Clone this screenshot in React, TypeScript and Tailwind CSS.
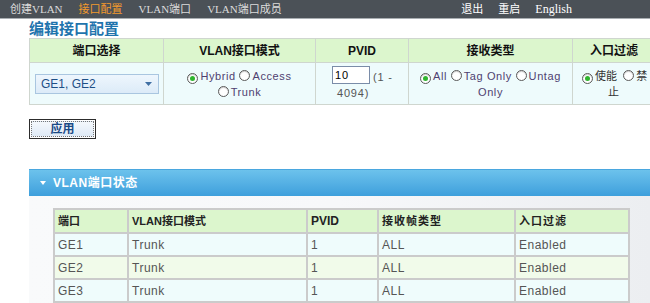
import React from "react";

const cjk = '"Liberation Sans", "Noto Sans CJK SC", sans-serif';
const navFont = '"Liberation Serif", "Noto Sans CJK SC", serif';

function Radio({ checked }: { checked?: boolean }) {
  return (
    <span className="inline-flex items-center justify-center w-[11px] h-[11px] rounded-full border border-[#5a5a5a] bg-white align-[-1px] mr-[2px] shadow-[inset_0_1px_1px_rgba(0,0,0,0.2)]">
      {checked && <span className="w-[5px] h-[5px] rounded-full bg-[#2fb52f]" />}
    </span>
  );
}

export default function App() {
  const rows = [
    { p: "GE1", bg: "bg-[#effcfc]" },
    { p: "GE2", bg: "bg-[#f1fbea]" },
    { p: "GE3", bg: "bg-[#effcfc]" },
  ];
  return (
    <div className="w-[650px] h-[303px] overflow-hidden bg-white relative" style={{ fontFamily: cjk }}>
      {/* nav */}
      <div className="h-[19px] bg-[#4b5157] border-b border-[#a9aeb2] flex items-center text-[11px] text-[#dcdcdc]" style={{ fontFamily: navFont }}>
        <div className="flex items-center gap-[16px] pl-[10px]">
          <span>创建VLAN</span>
          <span className="text-[#f39a2c]">接口配置</span>
          <span>VLAN端口</span>
          <span>VLAN端口成员</span>
        </div>
        <div className="ml-auto flex items-center gap-[15px] pr-[78px] text-white">
          <span>退出</span>
          <span>重启</span>
          <span className="text-[12px]">English</span>
        </div>
      </div>

      <div className="pl-[29px]">
        <div className="h-[19px] pt-[1px] text-[15px] font-bold text-[#1f74ad] leading-[18px]">编辑接口配置</div>

        <table className="border-collapse table-fixed w-[640px] text-[11px]">
          <colgroup>
            <col className="w-[134px]" />
            <col className="w-[152px]" />
            <col className="w-[93px]" />
            <col className="w-[164px]" />
            <col className="w-[97px]" />
          </colgroup>
          <thead>
            <tr className="h-[24px] bg-[#dcf6cd] text-[12px] font-bold text-[#111]">
              <th className="border border-[#cfd6cf] font-bold">端口选择</th>
              <th className="border border-[#cfd6cf] font-bold">VLAN接口模式</th>
              <th className="border border-[#cfd6cf] font-bold">PVID</th>
              <th className="border border-[#cfd6cf] font-bold">接收类型</th>
              <th className="border border-[#cfd6cf] font-bold text-left pl-[17px]">入口过滤</th>
            </tr>
          </thead>
          <tbody>
            <tr className="h-[42px] bg-[#eefbfc]">
              <td className="border border-[#cfd6cf] px-[5px]">
                <div className="h-[20px] w-[124px] border border-[#a9c6e0] bg-gradient-to-b from-[#eef6fd] to-[#dcebf8] flex items-center pl-[5px] pr-[6px] text-[12px] text-[#1d4f86]">
                  <span>GE1, GE2</span>
                  <svg className="ml-auto" width="7" height="4" viewBox="0 0 7 4"><path d="M0 0h7L3.5 4z" fill="#3f6fa3" /></svg>
                </div>
              </td>
              <td className="border border-[#cfd6cf] text-center text-[#4f3f70] tracking-[0.6px] leading-[16px]">
                <div><Radio checked />Hybrid <Radio />Access</div>
                <div><Radio />Trunk</div>
              </td>
              <td className="border border-[#cfd6cf] text-[#555] tracking-[0.8px] leading-[16px]">
                <div className="flex items-start pl-[16px]">
                  <span className="inline-block w-[38px] h-[18px] border border-[#7a8ca8] bg-white text-[11px] text-black pl-[2px] leading-[16px]">10</span>
                  <span className="ml-[3px] mt-[3px]">(1 -</span>
                </div>
                <div className="pl-[21px]">4094)</div>
              </td>
              <td className="border border-[#cfd6cf] text-center text-[#4f3f70] tracking-[0.6px] leading-[16px]">
                <div><Radio checked />All <Radio />Tag Only <Radio />Untag</div>
                <div>Only</div>
              </td>
              <td className="border border-[#cfd6cf] text-[#333] leading-[16px] pl-[9px]">
                <div><Radio checked />使能 &nbsp;<Radio />禁</div>
                <div className="pl-[26px]">止</div>
              </td>
            </tr>
          </tbody>
        </table>

        <div className="h-[14px]" />
        <button className="w-[67px] h-[20px] border border-[#2c2c2c] p-[1px] bg-white block">
          <div className="w-full h-full border border-dotted border-[#777] bg-gradient-to-b from-[#f4f8fc] to-[#dfeaf6] flex items-center justify-center text-[12px] font-bold text-[#1a4a86] leading-none">
            应用
          </div>
        </button>

        <div className="h-[30px]" />
        <div className="h-[27px] border-t border-[#4aa7df] bg-gradient-to-b from-[#6cc2ec] to-[#3d9fdc] flex items-center text-white text-[12px] font-bold tracking-[0.5px]">
          <svg className="ml-[11px] mr-[7px]" width="6" height="4" viewBox="0 0 6 4"><path d="M0 0h6L3 4z" fill="#ffffff" /></svg>
          VLAN端口状态
        </div>
        <div className="bg-gradient-to-r from-[#f9fafb] via-[#f7f8fa] to-[#eceef1] pt-[12px] pl-[24px] h-[200px]">
          <table className="border-collapse table-fixed w-[575px] text-[12px]">
            <colgroup>
              <col className="w-[74px]" />
              <col className="w-[179px]" />
              <col className="w-[71px]" />
              <col className="w-[137px]" />
              <col className="w-[114px]" />
            </colgroup>
            <thead>
              <tr className="h-[24px] bg-[#dcf6cd] text-[11px] text-[#222]">
                <th className="border-2 border-[#cbcbcb] text-left pl-[3px] font-bold">端口</th>
                <th className="border-2 border-[#cbcbcb] text-left pl-[3px] font-bold">VLAN接口模式</th>
                <th className="border-2 border-[#cbcbcb] text-left pl-[3px] font-bold text-[12px]">PVID</th>
                <th className="border-2 border-[#cbcbcb] text-left pl-[3px] font-bold tracking-[1px]">接收帧类型</th>
                <th className="border-2 border-[#cbcbcb] text-left pl-[3px] font-bold tracking-[1px]">入口过滤</th>
              </tr>
            </thead>
            <tbody className="text-[#555] tracking-[0.5px]">
              {rows.map((r) => (
                <tr key={r.p} className={`h-[23px] ${r.bg}`}>
                  <td className="border-2 border-[#cbcbcb] pl-[3px]">{r.p}</td>
                  <td className="border-2 border-[#cbcbcb] pl-[3px]">Trunk</td>
                  <td className="border-2 border-[#cbcbcb] pl-[3px]">1</td>
                  <td className="border-2 border-[#cbcbcb] pl-[3px]">ALL</td>
                  <td className="border-2 border-[#cbcbcb] pl-[3px]">Enabled</td>
                </tr>
              ))}
              <tr className="h-[23px] bg-[#f1fbea]">
                <td className="border-2 border-[#cbcbcb]" />
                <td className="border-2 border-[#cbcbcb]" />
                <td className="border-2 border-[#cbcbcb]" />
                <td className="border-2 border-[#cbcbcb]" />
                <td className="border-2 border-[#cbcbcb]" />
              </tr>
            </tbody>
          </table>
        </div>
      </div>
    </div>
  );
}
